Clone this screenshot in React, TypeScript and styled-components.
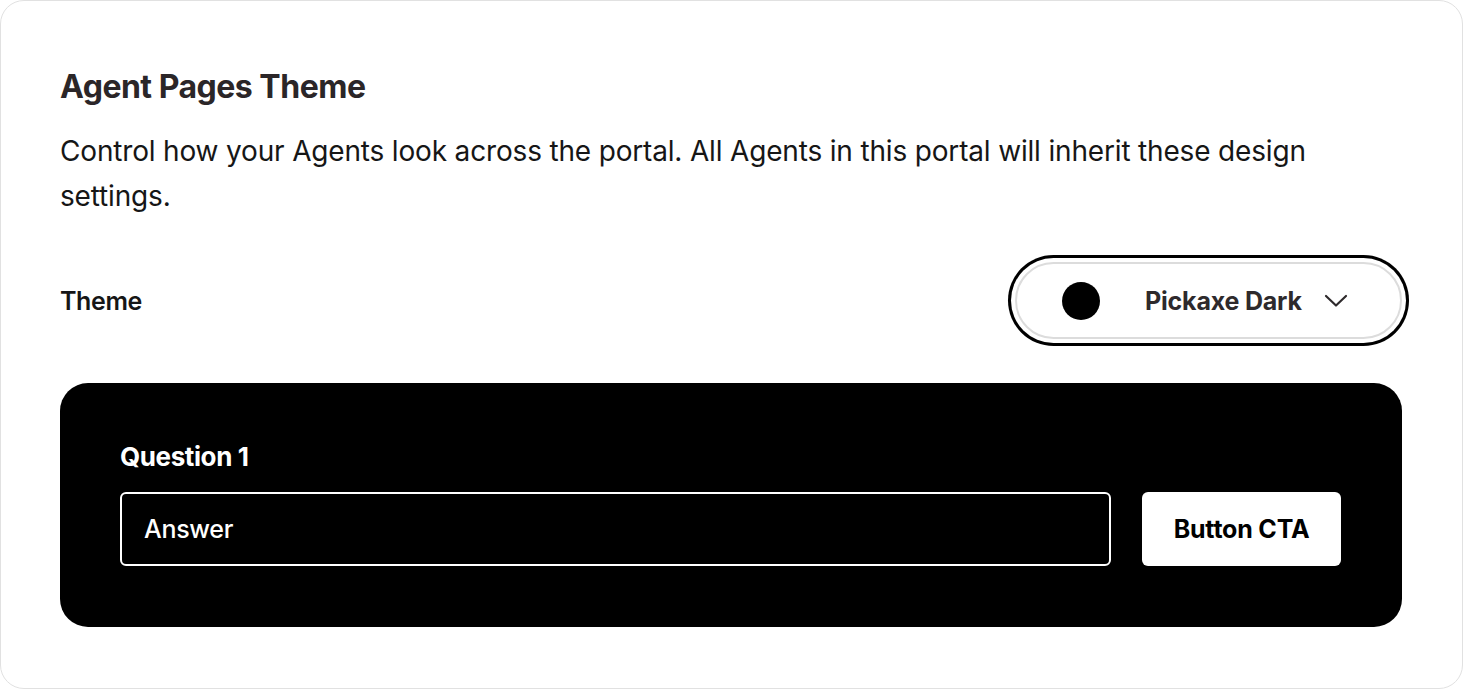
import styled, { createGlobalStyle } from "styled-components";

const GlobalStyle = createGlobalStyle`
  html, body {
    margin: 0;
    padding: 0;
    background: #ffffff;
  }
  body {
    font-family: Inter, "Noto Sans", "Liberation Sans", sans-serif;
    -webkit-font-smoothing: antialiased;
  }
  * {
    box-sizing: border-box;
  }
`;

const ChevronDown = () => (
  <svg width="24" height="14" viewBox="0 0 24 14" fill="none">
    <polyline
      points="2,2 12,11.5 22,2"
      stroke="#2e2a2c"
      strokeWidth="2.2"
      strokeLinecap="round"
      strokeLinejoin="round"
    />
  </svg>
);

export default function App() {
  return (
    <>
      <GlobalStyle />
      <Card>
        <Title>Agent Pages Theme</Title>
        <Description>
          Control how your Agents look across the portal. All Agents in this portal will
          inherit these design settings.
        </Description>
        <ThemeRow>
          <RowLabel>Theme</RowLabel>
          <Select type="button">
            <Swatch color="#000000" />
            <SelectText>Pickaxe Dark</SelectText>
            <ChevronDown />
          </Select>
        </ThemeRow>
        <Preview>
          <QuestionLabel>Question 1</QuestionLabel>
          <AnswerRow>
            <AnswerField>Answer</AnswerField>
            <CtaButton type="button">Button CTA</CtaButton>
          </AnswerRow>
        </Preview>
      </Card>
    </>
  );
}

const Card = styled.section`
  width: 1463px;
  height: 689px;
  padding: 68px 60px 60px 59px;
  border: 1px solid #e1e1e1;
  border-radius: 24px;
  background: #ffffff;
  display: flex;
  flex-direction: column;
`;

const Title = styled.h2`
  margin: 0;
  font-size: 32px;
  line-height: 36px;
  font-weight: 700;
  letter-spacing: -0.5px;
  color: #2b2628;
`;

const Description = styled.p`
  margin: 24px 0 0;
  font-size: 28px;
  line-height: 45px;
  font-weight: 400;
  letter-spacing: -0.17px;
  color: #161616;
`;

const ThemeRow = styled.div`
  margin-top: 43px;
  display: flex;
  align-items: center;
  justify-content: space-between;
`;

const RowLabel = styled.span`
  font-size: 25px;
  font-weight: 600;
  letter-spacing: -0.4px;
  color: #161616;
`;

const Select = styled.button`
  width: 387px;
  height: 77px;
  padding: 0 52px 0 45px;
  display: flex;
  align-items: center;
  border: 2px solid #dcdcdc;
  border-radius: 999px;
  background: #ffffff;
  box-shadow: 0 0 0 4px #ffffff, 0 0 0 7px #000000;
  font-family: inherit;
  cursor: pointer;
`;

const Swatch = styled.span<{ color: string }>`
  width: 38px;
  height: 38px;
  border-radius: 50%;
  background: ${(p) => p.color};
  flex-shrink: 0;
`;

const SelectText = styled.span`
  margin: 0 22px 0 45px;
  font-size: 25px;
  font-weight: 700;
  letter-spacing: -0.2px;
  color: #2e2a2c;
  white-space: nowrap;
`;

const Preview = styled.div`
  margin-top: 44px;
  padding: 60px 61px 61px 60px;
  border-radius: 28px;
  background: #000000;
  display: flex;
  flex-direction: column;
`;

const QuestionLabel = styled.div`
  font-size: 26px;
  line-height: 28px;
  font-weight: 700;
  letter-spacing: -0.4px;
  color: #ffffff;
`;

const AnswerRow = styled.div`
  margin-top: 21px;
  display: flex;
  gap: 31px;
`;

const AnswerField = styled.div`
  flex: 1;
  height: 74px;
  padding: 0 22px;
  display: flex;
  align-items: center;
  border: 2px solid #ffffff;
  border-radius: 6px;
  font-size: 25px;
  font-weight: 500;
  letter-spacing: -0.3px;
  color: #ffffff;
`;

const CtaButton = styled.button`
  width: 199px;
  height: 74px;
  border: none;
  border-radius: 6px;
  background: #ffffff;
  font-family: inherit;
  font-size: 25px;
  font-weight: 700;
  letter-spacing: -0.2px;
  color: #000000;
  cursor: pointer;
`;
